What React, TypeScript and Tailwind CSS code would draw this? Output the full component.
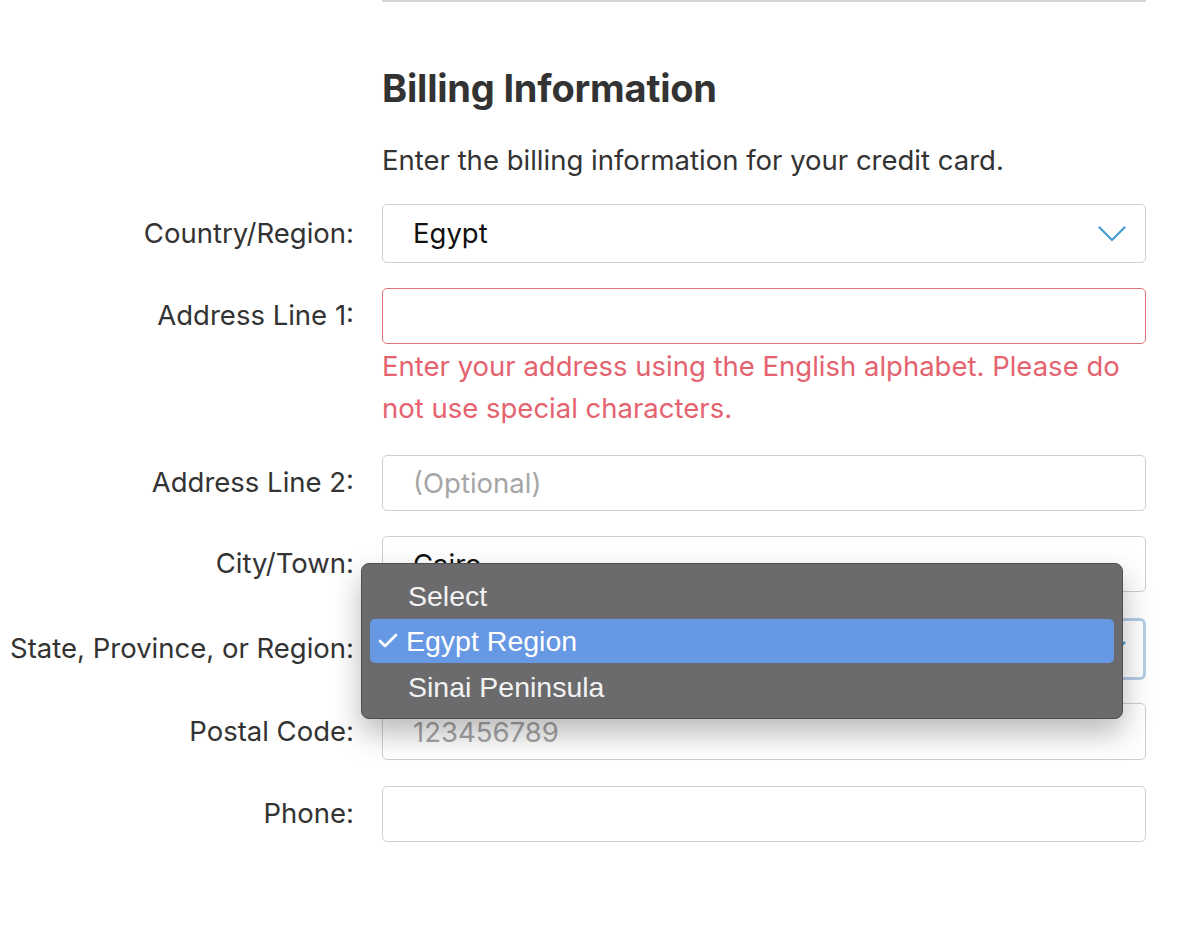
import { Check } from "lucide-react"

const inputBase =
  "h-[56px] w-full rounded-[5px] border border-[#cfcfd2] bg-white px-[30px] text-[27.5px] outline-none"

const Label = ({ children }: { children: React.ReactNode }) => (
  <div className="text-right text-[27.5px] leading-none text-[#333]">{children}</div>
)

const Chevron = () => (
  <svg width="28" height="16" viewBox="0 0 28 16" fill="none" className="shrink-0">
    <path d="M1.5 1.5 L14 14 L26.5 1.5" stroke="#4f9fd6" strokeWidth="2.4" strokeLinecap="round" strokeLinejoin="round" />
  </svg>
)

const menuItem = "flex items-center font-['Liberation_Sans',sans-serif] text-[28.5px]"

const App = () => {
  return (
    <div className="min-h-[941px] w-[1200px] bg-white font-['Inter',sans-serif] text-[#333]">
      <div className="ml-[382px] w-[764px] border-t-2 border-[#d6d6d6] pt-[64px]">
        <h2 className="text-[38px] font-bold leading-[44px] tracking-[-0.2px] text-[#333]">Billing Information</h2>
        <p className="mt-[33px] text-[27.5px] leading-[34px]">Enter the billing information for your credit card.</p>
      </div>

      <div className="mt-[27px] grid grid-cols-[354px_764px] items-center gap-x-[28px]">
        <Label>Country/Region:</Label>
        <div className="flex h-[59px] items-center justify-between rounded-[5px] border border-[#cfcfd2] bg-white pl-[30px] pr-[19px]">
          <span className="text-[27.5px] text-[#111]">Egypt</span>
          <Chevron />
        </div>

        <div className="col-span-2 h-[25px]" />

        <Label>Address Line 1:</Label>
        <input className={`${inputBase} border-[#e6737c]`} />

        <div />
        <p className="pt-[1px] text-[27.5px] leading-[42px] text-[#e4636f]">
          Enter your address using the English alphabet. Please do not use special characters.
        </p>

        <div className="col-span-2 h-[26px]" />

        <Label>Address Line 2:</Label>
        <input className={`${inputBase} placeholder:text-[#a6a6a6]`} placeholder="(Optional)" />

        <div className="col-span-2 h-[25px]" />

        <Label>City/Town:</Label>
        <input className={`${inputBase} text-[#111]`} defaultValue="Cairo" />

        <div className="col-span-2 h-[26px]" />

        <Label>State, Province, or Region:</Label>
        <div className="relative">
          <div className="flex h-[62px] items-center justify-end rounded-[6px] border-[3px] border-[#b6cde6] bg-white pr-[17px]">
            <Chevron />
          </div>
          <div className="absolute left-[-21px] top-[-55px] z-10 w-[762px] rounded-[8px] border border-[#4e4e50] bg-[#6b6b6d] px-[8px] pb-[7px] pt-[9px] shadow-[0_14px_30px_rgba(0,0,0,0.28)]">
            <div className={`${menuItem} h-[46px] pl-[38px] text-[#f2f2f2]`}>Select</div>
            <div className={`${menuItem} h-[44px] rounded-[5px] bg-[#6698e4] pl-[6px] text-white`}>
              <Check className="mr-[6px] h-[24px] w-[24px]" strokeWidth={2.6} />
              Egypt Region
            </div>
            <div className={`${menuItem} h-[48px] pl-[38px] text-[#f2f2f2]`}>Sinai Peninsula</div>
          </div>
        </div>

        <div className="col-span-2 h-[23px]" />

        <Label>Postal Code:</Label>
        <input className={`${inputBase} h-[57px] placeholder:text-[#a6a6a6]`} placeholder="123456789" />

        <div className="col-span-2 h-[26px]" />

        <Label>Phone:</Label>
        <input className={inputBase} />
      </div>
    </div>
  )
}

export default App
